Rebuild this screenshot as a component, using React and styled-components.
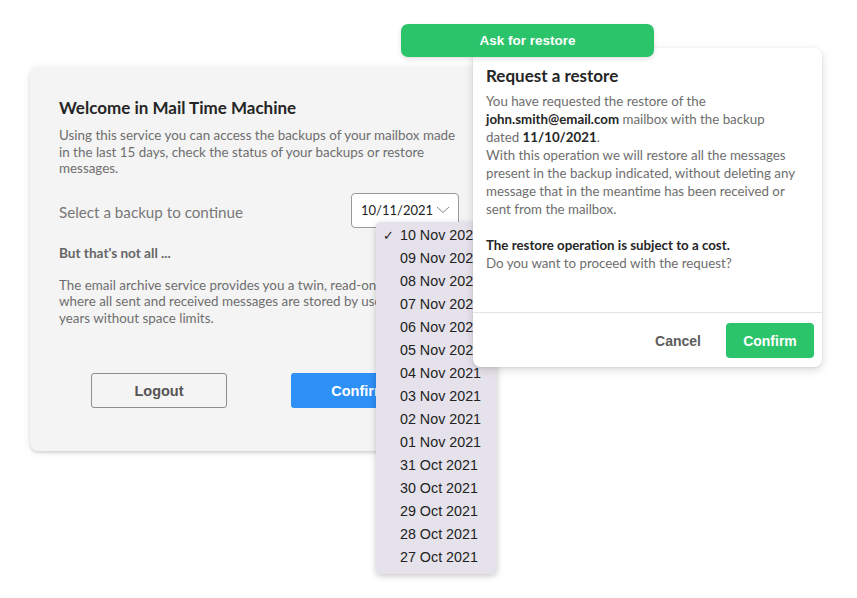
import React from "react";
import styled, { createGlobalStyle } from "styled-components";

const Global = createGlobalStyle`
  html, body { margin: 0; padding: 0; background: #ffffff; }
  * { box-sizing: border-box; }
`;

const Stage = styled.div`
  position: relative;
  width: 857px;
  height: 598px;
  overflow: hidden;
  background: #fff;
  font-family: Lato, "Noto Sans", sans-serif;
`;

const Card = styled.section`
  position: absolute;
  left: 30px;
  top: 67px;
  width: 459px;
  height: 384px;
  background: #f4f4f4;
  border-radius: 8px;
  box-shadow: 0 2px 3px rgba(0, 0, 0, 0.12), 0 1px 10px rgba(0, 0, 0, 0.08);
  padding: 30px 30px 0 29px;
  display: flex;
  flex-direction: column;
`;

const Title = styled.h1`
  margin: 0;
  font-size: 17px;
  line-height: 22px;
  font-weight: 700;
  color: #262626;
`;

const Para = styled.p`
  margin: ${(p) => p.$mt || 0}px 0 0;
  font-size: 13.4px;
  line-height: 16.5px;
  color: #6e6e6e;
`;

const SelectRow = styled.div`
  margin-top: 16px;
  display: flex;
  align-items: center;
  justify-content: space-between;
`;

const SelectLabel = styled.span`
  font-size: 15.2px;
  color: #777;
  padding-top: 3px;
`;

const SelectBox = styled.div`
  width: 108px;
  height: 35px;
  border: 1px solid #9a9a9a;
  border-radius: 4px;
  background: #fff;
  display: flex;
  align-items: center;
  justify-content: space-between;
  padding: 0 8px 0 9px;
  font-size: 13px;
  color: #222;
`;

const Sub = styled.h2`
  margin: 17px 0 0;
  font-size: 13.6px;
  line-height: 16px;
  font-weight: 700;
  color: #666;
`;

const ButtonRow = styled.div`
  margin-top: 47px;
  display: flex;
  justify-content: center;
  gap: 64px;
`;

const Btn = styled.button`
  width: 136px;
  height: 35px;
  border-radius: 3px;
  font-family: "Liberation Sans", Arial, sans-serif;
  font-weight: 700;
  font-size: 14.5px;
  cursor: pointer;
  border: ${(p) => (p.$primary ? "none" : "1px solid #8d8d8d")};
  background: ${(p) => (p.$primary ? "#2e8ff7" : "transparent")};
  color: ${(p) => (p.$primary ? "#fff" : "#555")};
`;

const Dropdown = styled.ul`
  position: absolute;
  left: 376px;
  top: 222px;
  width: 121px;
  height: 352px;
  margin: 0;
  padding: 2px 0 0;
  list-style: none;
  background: #e6e2eb;
  border-radius: 5px;
  box-shadow: 0 2px 6px rgba(0, 0, 0, 0.22);
  font-family: "Liberation Sans", Arial, sans-serif;
  font-size: 14.3px;
  color: #222;
`;

const Item = styled.li`
  height: 23px;
  line-height: 23px;
  padding-left: 24px;
  position: relative;
  white-space: nowrap;
`;

const Check = styled.span`
  position: absolute;
  left: 7px;
  top: 0;
  font-size: 13px;
`;

const Modal = styled.section`
  position: absolute;
  left: 473px;
  top: 48px;
  width: 349px;
  height: 319px;
  background: #fff;
  border-radius: 8px;
  box-shadow: 0 3px 10px rgba(0, 0, 0, 0.14), 0 1px 3px rgba(0, 0, 0, 0.08);
  display: flex;
  flex-direction: column;
`;

const ModalBody = styled.div`
  flex: 1;
  padding: 17px 20px 0 13px;
  border-bottom: 1px solid #e4e4e4;
`;

const ModalTitle = styled.h3`
  margin: 0;
  font-size: 17px;
  line-height: 22px;
  font-weight: 700;
  color: #262626;
`;

const ModalText = styled.p`
  margin: ${(p) => p.$mt || 0}px 0 0;
  font-size: 13.3px;
  line-height: 18px;
  color: #6e6e6e;
  b {
    color: #262626;
    font-weight: 700;
  }
`;

const ModalFooter = styled.div`
  height: 54px;
  padding: 10px 8px 9px;
  display: flex;
  justify-content: flex-end;
  gap: 4px;
`;

const FooterBtn = styled.button`
  width: 88px;
  height: 35px;
  border: none;
  border-radius: 4px;
  font-family: "Liberation Sans", Arial, sans-serif;
  font-weight: 700;
  font-size: 14px;
  background: ${(p) => (p.$primary ? "#2bc46b" : "transparent")};
  color: ${(p) => (p.$primary ? "#fff" : "#5c5c5c")};
`;

const Pill = styled.div`
  position: absolute;
  left: 401px;
  top: 24px;
  width: 253px;
  height: 33px;
  border-radius: 7px;
  background: #2bc46b;
  box-shadow: 0 2px 5px rgba(0, 0, 0, 0.12);
  display: flex;
  align-items: center;
  justify-content: center;
  font-family: "Liberation Sans", Arial, sans-serif;
  font-weight: 700;
  font-size: 13.5px;
  color: #fff;
`;

const dates = [
  "10 Nov 2021", "09 Nov 2021", "08 Nov 2021", "07 Nov 2021", "06 Nov 2021",
  "05 Nov 2021", "04 Nov 2021", "03 Nov 2021", "02 Nov 2021", "01 Nov 2021",
  "31 Oct 2021", "30 Oct 2021", "29 Oct 2021", "28 Oct 2021", "27 Oct 2021",
];

export default function App() {
  return (
    <Stage>
      <Global />
      <Card>
        <Title>Welcome in Mail Time Machine</Title>
        <Para $mt={8}>
          Using this service you can access the backups of your mailbox made
          in the last 15 days, check the status of your backups or restore
          messages.
        </Para>
        <SelectRow>
          <SelectLabel>Select a backup to continue</SelectLabel>
          <SelectBox>
            <span>10/11/2021</span>
            <svg width="14" height="8" viewBox="0 0 14 8">
              <polyline points="1,1 7,6.5 13,1" fill="none" stroke="#777" strokeWidth="0.9" />
            </svg>
          </SelectBox>
        </SelectRow>
        <Sub>But that's not all ...</Sub>
        <Para $mt={16}>
          The email archive service provides you a twin, read-only mailbox
          where all sent and received messages are stored by user for 10
          years without space limits.
        </Para>
        <ButtonRow>
          <Btn>Logout</Btn>
          <Btn $primary>Confirm</Btn>
        </ButtonRow>
      </Card>

      <Dropdown>
        {dates.map((d, i) => (
          <Item key={d}>
            {i === 0 && <Check>✓</Check>}
            {d}
          </Item>
        ))}
      </Dropdown>

      <Modal>
        <ModalBody>
          <ModalTitle>Request a restore</ModalTitle>
          <ModalText $mt={5}>
            You have requested the restore of the <b>john.smith@email.com</b>{" "}
            mailbox with the backup
            <br />
            dated <b>11/10/2021</b>.
            <br />
            With this operation we will restore all the messages present in the
            backup indicated, without deleting any message that in the meantime
            has been received or sent from the mailbox.
          </ModalText>
          <ModalText $mt={18}>
            <b>The restore operation is subject to a cost.</b>
            <br />
            Do you want to proceed with the request?
          </ModalText>
        </ModalBody>
        <ModalFooter>
          <FooterBtn>Cancel</FooterBtn>
          <FooterBtn $primary>Confirm</FooterBtn>
        </ModalFooter>
      </Modal>

      <Pill>Ask for restore</Pill>
    </Stage>
  );
}
